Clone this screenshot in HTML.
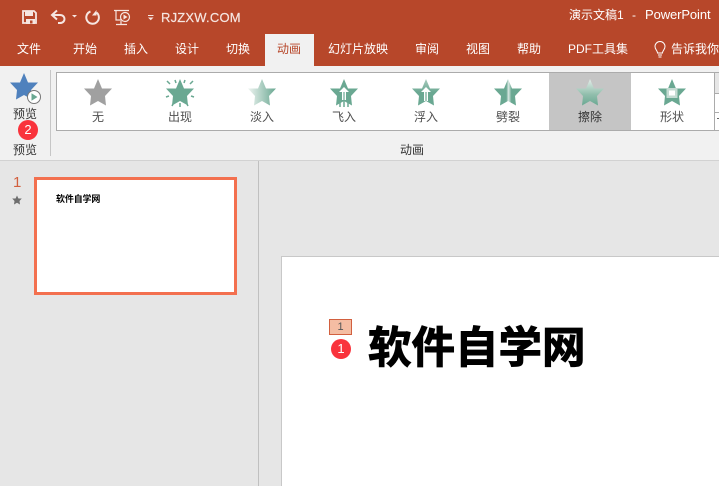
<!DOCTYPE html>
<html><head><meta charset="utf-8">
<style>
html,body{margin:0;padding:0;width:719px;height:486px;overflow:hidden;background:#e6e6e6}
body{position:relative;font-family:"Liberation Sans","Noto Sans CJK SC",sans-serif;font-size:12px;color:#444}
.a{position:absolute;white-space:nowrap;line-height:16px}
.t{position:absolute;white-space:nowrap;top:41px;line-height:16px;color:#fff;font-size:12px}
.l{position:absolute;white-space:nowrap;top:109px;width:60px;text-align:center;line-height:16px;color:#505050;font-size:12px}
svg{position:absolute;overflow:visible}
</style></head><body>
<div class="a" style="left:0;top:0;width:719px;height:66px;background:#b7472a"></div>
<div class="a" style="left:265px;top:34px;width:49px;height:32px;background:#f1f1f1"></div>
<div class="a" style="left:0;top:66px;width:719px;height:94px;background:#f1f1f1"></div>
<div class="a" style="left:0;top:160px;width:719px;height:1px;background:#d2d2d2"></div>

<svg style="left:0;top:0" width="160" height="34" fill="none" stroke="#f6e6e1">
<path d="M23 11h11l2 2v10h-13z" stroke-width="1.800"/>
<path d="M25 11h8v5h-8z" fill="#f6e6e1" stroke="none"/>
<path d="M26 19h9v5h-9z" fill="#f6e6e1" stroke="none"/>
<path d="M30 20.500h2.500v3h-2.500z" fill="#b7472a" stroke="none"/>
<path d="M57 10.500l-5 4.500 5 4.500" stroke-width="2"/><path d="M52 15h8c6 0 6 8 0 8h-2" stroke-width="2"/>
<path d="M72 15h5l-2.500 2.500z" fill="#f6e6e1" stroke="none"/>
<path d="M90.500 11.500a6.300 6.300 0 1 0 6 1" stroke-width="2"/><path d="M96.500 10v5.500h-4.500z" fill="#f6e6e1" stroke="none"/>
<path d="M114 10.500h15M116 11v9h6" stroke-width="1.200"/><path d="M121 21v3M116 24.500h11" stroke-width="1.200"/>
<circle cx="125" cy="17" r="4.500" stroke-width="1.200"/><path d="M123.500 14.500l4 2.500-4 2.500z" fill="#f6e6e1" stroke="none"/>
<path d="M148 15.500h5.500" stroke-width="1"/><path d="M148 17.500h5.500l-2.750 2.750z" fill="#f6e6e1" stroke="none"/>
</svg>
<div class="a" style="left:161px;top:10px;color:#f6e6e1;font-size:13px;letter-spacing:.2px;-webkit-text-stroke:.2px #f6e6e1">RJZXW.COM</div>
<div class="a" style="left:569px;top:7px;color:#fff;font-size:12px">演示文稿1</div>
<div class="a" style="left:632px;top:7px;color:#fff;font-size:12px">-</div>
<div class="a" style="left:645px;top:7px;color:#fff;font-size:13px;letter-spacing:-.1px">PowerPoint</div>

<div class="t" style="left:17px">文件</div>
<div class="t" style="left:73px">开始</div>
<div class="t" style="left:124px">插入</div>
<div class="t" style="left:175px">设计</div>
<div class="t" style="left:226px">切换</div>
<div class="t" style="left:277px;color:#b7472a">动画</div>
<div class="t" style="left:328px">幻灯片放映</div>
<div class="t" style="left:415px">审阅</div>
<div class="t" style="left:466px">视图</div>
<div class="t" style="left:517px">帮助</div>
<div class="t" style="left:568px">PDF工具集</div>
<svg style="left:652px;top:41px" width="16" height="18" fill="none" stroke="#fff" stroke-width="1">
<path d="M5.500 12c0-2.500-2.500-3.500-2.500-6.500a5 5 0 0 1 10 0c0 3-2.500 4-2.500 6.500z"/><path d="M6 14h4M6.500 16h3"/>
</svg>
<div class="t" style="left:671px;width:48px;overflow:hidden">告诉我你想要做什么</div>

<svg width="0" height="0" style="left:0;top:0"><defs>
<polygon id="s" points="0,-14 4,-4.500 14,-4.500 7,3 8,12.500 0,8 -8,12.500 -7,3 -14,-4.500 -4,-4.500"/>
<linearGradient id="g1" x1="0" x2="1" y1="0.500" y2="0.500"><stop offset="0" stop-color="#eef4f1"/><stop offset="1" stop-color="#6aa892"/></linearGradient>
<linearGradient id="g2" x1="0" x2="1" y1="0.500" y2="0.500"><stop offset="0" stop-color="#6aa892"/><stop offset=".44" stop-color="#6aa892"/><stop offset=".52" stop-color="#dbe9e4"/><stop offset=".62" stop-color="#6aa892"/><stop offset="1" stop-color="#6aa892"/></linearGradient>
<linearGradient id="g3" x1="0.500" x2="0.500" y1="0" y2="1"><stop offset="0" stop-color="#e4eeea"/><stop offset=".6" stop-color="#8fbdab"/><stop offset="1" stop-color="#6aa892"/></linearGradient>
<linearGradient id="g4" x1="0.500" x2="0.500" y1="0" y2="1"><stop offset="0" stop-color="#a9cbbd"/><stop offset=".5" stop-color="#6aa892"/></linearGradient>
</defs></svg>

<!-- preview -->
<svg style="left:24px;top:87px" width="1" height="1"><use href="#s" fill="#4f81bd"/></svg>
<svg style="left:27px;top:90px" width="14" height="14"><circle cx="7" cy="7" r="6.500" fill="#fff" stroke="#777" stroke-width="1"/><path d="M4.500 3.300l6 3.700-6 3.700z" fill="#6aa892"/></svg>
<div class="a" style="left:13px;top:106px;color:#333">预览</div>
<div class="a" style="left:18px;top:120px;width:20px;height:20px;border-radius:50%;background:#f9333c;color:#fff;text-align:center;line-height:20px;font-size:13px">2</div>
<div class="a" style="left:13px;top:142px;color:#333">预览</div>
<div class="a" style="left:50px;top:70px;width:1px;height:86px;background:#c6c6c6"></div>

<!-- gallery -->
<div class="a" style="left:56px;top:72px;width:659px;height:59px;background:#fff;box-shadow:inset 0 0 0 1px #ababab"></div>
<div class="a" style="left:549px;top:73px;width:82px;height:57px;background:#c5c5c5"></div>
<div class="a" style="left:715px;top:72px;width:4px;height:59px;background:#fff"></div>
<div class="a" style="left:715px;top:73px;width:4px;height:20px;background:#e6e6e6"></div>
<div class="a" style="left:715px;top:93px;width:4px;height:1px;background:#ababab"></div>
<div class="a" style="left:715px;top:112px;width:4px;height:1px;background:#ababab"></div>
<div class="a" style="left:717px;top:118px;width:2px;height:1px;background:#666"></div>
<div class="a" style="left:715px;top:72px;width:4px;height:1px;background:#ababab"></div>
<div class="a" style="left:715px;top:130px;width:4px;height:1px;background:#ababab"></div>

<svg style="left:98px;top:93px" width="1" height="1"><use href="#s" fill="#a0a0a0"/></svg>

<svg style="left:180px;top:93px" width="1" height="1"><use href="#s" fill="#6aa892"/>
<path d="M-13-12l3 3M13-12l-3 3M-5-13l1 3M5-13l-1 3M-14 4l3-1M14 4l-3-1M0 10v4M-8 13l1-2M8 13l-1-2" stroke="#6aa892" stroke-width="1.500" fill="none"/></svg>

<svg style="left:262px;top:93px" width="1" height="1"><use href="#s" fill="url(#g1)"/></svg>

<svg style="left:344px;top:93px" width="1" height="1"><use href="#s" fill="#6aa892"/>
<path d="M0-6l-5 5h3v8h4v-8h3z" fill="#fff"/><path d="M-.6-1v8h1.200v-8z" fill="#6aa892"/>
<path d="M-4 9v5M0 8v6M4 9v5" stroke="#6aa892" stroke-width="1.500"/></svg>

<svg style="left:426px;top:93px" width="1" height="1"><use href="#s" fill="url(#g4)"/>
<path d="M0-6l-5 5h3v9h4v-9h3z" fill="#fff"/><path d="M-.6-1v9h1.200v-9z" fill="#6aa892"/></svg>

<svg style="left:508px;top:93px" width="1" height="1"><use href="#s" fill="url(#g2)"/></svg>

<svg style="left:590px;top:93px" width="1" height="1"><use href="#s" fill="url(#g3)"/></svg>

<svg style="left:672px;top:93px" width="1" height="1"><use href="#s" fill="#6aa892"/>
<rect x="-5.500" y="-5" width="11" height="10" fill="#c4dbd2"/><rect x="-3" y="-2.500" width="6" height="5" fill="#fff"/></svg>

<div class="l" style="left:68px">无</div>
<div class="l" style="left:150px">出现</div>
<div class="l" style="left:232px">淡入</div>
<div class="l" style="left:314px">飞入</div>
<div class="l" style="left:396px">浮入</div>
<div class="l" style="left:478px">劈裂</div>
<div class="l" style="left:560px;color:#333">擦除</div>
<div class="l" style="left:642px">形状</div>
<div class="a" style="left:400px;top:142px;color:#333">动画</div>

<!-- left pane -->
<div class="a" style="left:0;top:161px;width:258px;height:325px;background:#e6e6e6"></div>
<div class="a" style="left:258px;top:161px;width:1px;height:325px;background:#c0c0c0"></div>
<div class="a" style="left:13px;top:175px;color:#d2603f;font-size:15px">1</div>
<svg style="left:17px;top:200px" width="1" height="1"><polygon points="0,-4.500 1.400,-1.500 4.800,-1.500 2.500,1 3,4.500 0,2.800 -3,4.500 -2.500,1 -4.800,-1.500 -1.400,-1.500" fill="#6e6e6e"/></svg>
<div class="a" style="left:34px;top:177px;width:197px;height:112px;background:#fff;border:3px solid #f3704f"></div>
<div class="a" style="left:56px;top:192px;color:#000;font-size:9px;font-weight:bold;line-height:14px;letter-spacing:-.15px">软件自学网</div>

<!-- slide -->
<div class="a" style="left:282px;top:257px;width:437px;height:229px;background:#fff;box-shadow:0 0 0 1px #c8c8c8"></div>
<div class="a" style="left:329px;top:319px;width:21px;height:14px;background:#f4bda3;border:1px solid #d2603f;color:#555;text-align:center;font-size:11px;line-height:14px">1</div>
<div class="a" style="left:331px;top:339px;width:20px;height:20px;border-radius:50%;background:#f9333c;color:#fff;text-align:center;line-height:20px;font-size:13px">1</div>
<div class="a" style="left:368px;top:321px;color:#000;font-size:43.500px;font-weight:bold;line-height:56px;-webkit-text-stroke:1px #000">软件自学网</div>
</body></html>
